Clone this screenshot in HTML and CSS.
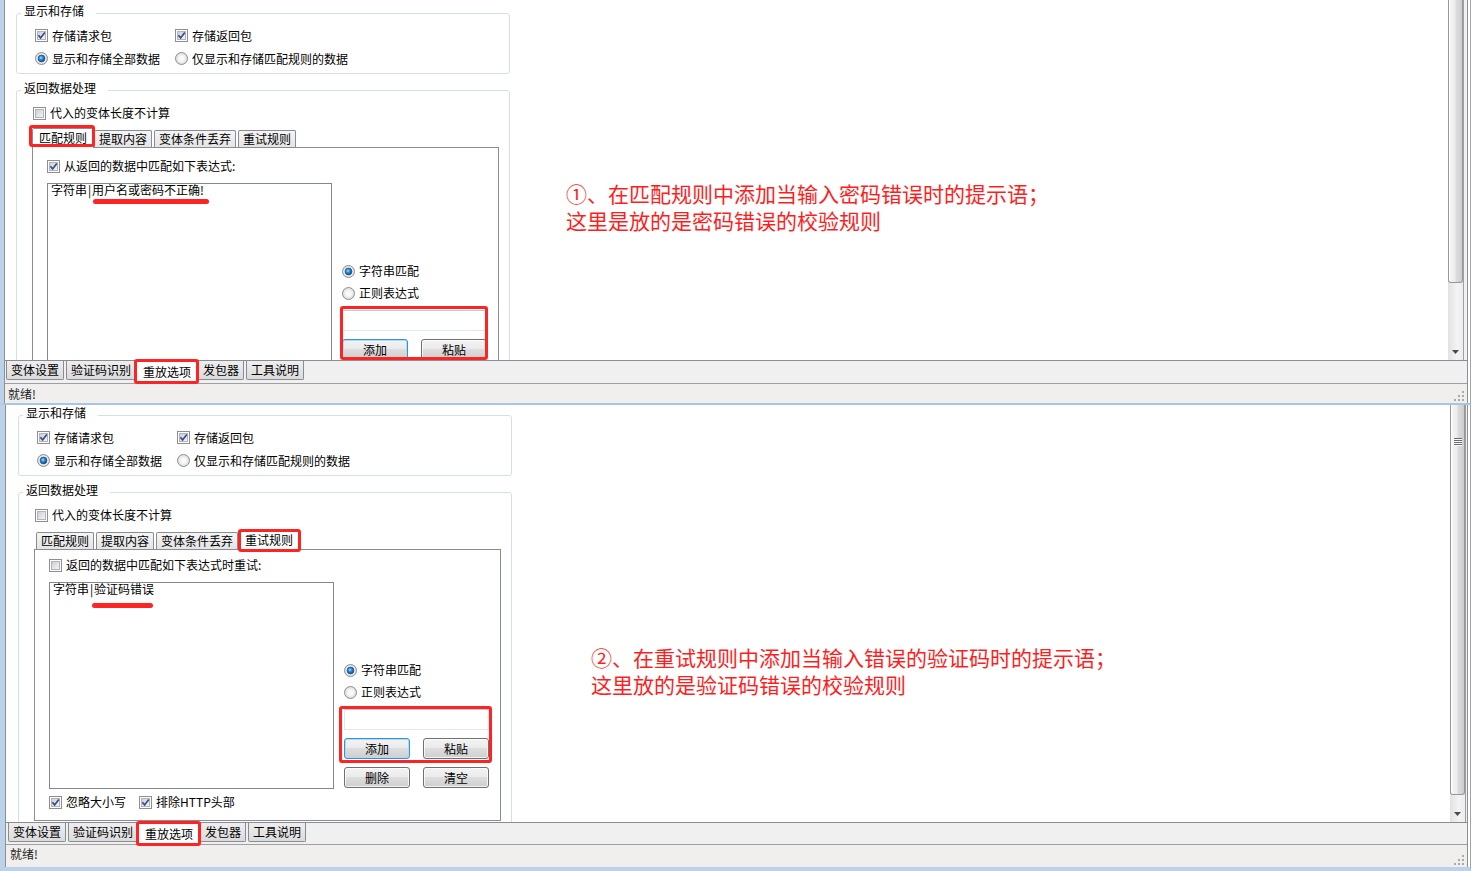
FILE: index.html
```html
<!DOCTYPE html>
<html lang="zh-CN">
<head>
<meta charset="utf-8">
<title>重放选项</title>
<link rel="stylesheet" href="styles.css">
</head>
<body>
<svg class="defs" width="0" height="0" aria-hidden="true">
  <defs>
    <linearGradient id="gCb" x1="0" y1="0" x2="1" y2="1"><stop offset="0" stop-color="#c9cdd3"/><stop offset="1" stop-color="#f7f7f7"/></linearGradient>
    <radialGradient id="gRd" cx="0.5" cy="0.5" r="0.6"><stop offset="0.3" stop-color="#fafafa"/><stop offset="1" stop-color="#cfd1d4"/></radialGradient>
    <radialGradient id="gDot" cx="0.42" cy="0.4" r="0.62"><stop offset="0" stop-color="#a6e4ff"/><stop offset="0.45" stop-color="#2a89d4"/><stop offset="1" stop-color="#0c4585"/></radialGradient>
  </defs>
</svg>

<div class="panel panel--one">
  <div class="client">
    <div class="viewport">
      <div class="content">
        <div class="group">
          <span class="legend">显示和存储</span>
          <div class="opts">
            <div class="opt"><svg class="ck" viewBox="0 0 13 13"><rect x=".5" y=".5" width="12" height="12" fill="#fff" stroke="#8f8f8f"/><rect x="2.5" y="2.5" width="8" height="8" fill="url(#gCb)" stroke="#b0b4ba"/><path d="M3.4 6.3 5.6 8.9 9.8 3.4" fill="none" stroke="#374d8a" stroke-width="1.7"/></svg><span>存储请求包</span></div>
            <div class="opt"><svg class="ck" viewBox="0 0 13 13"><rect x=".5" y=".5" width="12" height="12" fill="#fff" stroke="#8f8f8f"/><rect x="2.5" y="2.5" width="8" height="8" fill="url(#gCb)" stroke="#b0b4ba"/><path d="M3.4 6.3 5.6 8.9 9.8 3.4" fill="none" stroke="#374d8a" stroke-width="1.7"/></svg><span>存储返回包</span></div>
            <div class="opt"><svg class="rd" viewBox="0 0 13 13"><circle cx="6.5" cy="6.5" r="6" fill="url(#gRd)" stroke="#8f8f8f"/><circle cx="6.5" cy="6.5" r="3.4" fill="url(#gDot)" stroke="#1b4e82" stroke-width=".7"/></svg><span>显示和存储全部数据</span></div>
            <div class="opt"><svg class="rd" viewBox="0 0 13 13"><circle cx="6.5" cy="6.5" r="6" fill="url(#gRd)" stroke="#8f8f8f"/></svg><span>仅显示和存储匹配规则的数据</span></div>
          </div>
        </div>

        <div class="group group--resp">
          <span class="legend">返回数据处理</span>
          <div class="opt opt--lead"><svg class="ck" viewBox="0 0 13 13"><rect x=".5" y=".5" width="12" height="12" fill="#fff" stroke="#8f8f8f"/><rect x="2.5" y="2.5" width="8" height="8" fill="url(#gCb)" stroke="#b0b4ba"/></svg><span>代入的变体长度不计算</span></div>
          <div class="tabctl">
            <div class="tabhead">
              <span class="tab tab--on hl hl--tab1">匹配规则</span>
              <span class="tab">提取内容</span>
              <span class="tab">变体条件丢弃</span>
              <span class="tab">重试规则</span>
            </div>
            <div class="tabpage tabpage--match">
              <div class="opt"><svg class="ck" viewBox="0 0 13 13"><rect x=".5" y=".5" width="12" height="12" fill="#fff" stroke="#8f8f8f"/><rect x="2.5" y="2.5" width="8" height="8" fill="url(#gCb)" stroke="#b0b4ba"/><path d="M3.4 6.3 5.6 8.9 9.8 3.4" fill="none" stroke="#374d8a" stroke-width="1.7"/></svg><span>从返回的数据中匹配如下表达式:</span></div>
              <div class="pagebody">
                <div class="listbox">
                  <div class="item">字符串<span class="bar">|</span>用户名或密码不正确!</div>
                  <span class="uline uline--one"></span>
                </div>
                <div class="side">
                  <div class="opt"><svg class="rd" viewBox="0 0 13 13"><circle cx="6.5" cy="6.5" r="6" fill="url(#gRd)" stroke="#8f8f8f"/><circle cx="6.5" cy="6.5" r="3.4" fill="url(#gDot)" stroke="#1b4e82" stroke-width=".7"/></svg><span>字符串匹配</span></div>
                  <div class="opt"><svg class="rd" viewBox="0 0 13 13"><circle cx="6.5" cy="6.5" r="6" fill="url(#gRd)" stroke="#8f8f8f"/></svg><span>正则表达式</span></div>
                  <div class="addbox hl hl--add1">
                    <div class="textbox"></div>
                    <div class="btnrow"><span class="btn btn--default">添加</span><span class="btn">粘贴</span></div>
                  </div>
                </div>
              </div>
            </div>
          </div>
        </div>

        <div class="note note--one"><div>①、在匹配规则中添加当输入密码错误时的提示语；</div><div>这里是放的是密码错误的校验规则</div></div>
      </div>
      <div class="vscroll">
        <div class="thumb"></div>
        <div class="track"></div>
        <div class="sb-arrow"><svg width="7" height="4" viewBox="0 0 7 4"><path d="M0 0h7L3.5 4z" fill="#4a4a4a"/></svg></div>
      </div>
    </div>
    <div class="ptabs">
      <span class="ptab">变体设置</span>
      <span class="ptab">验证码识别</span>
      <span class="ptab ptab--on hl hl--ptab">重放选项</span>
      <span class="ptab">发包器</span>
      <span class="ptab">工具说明</span>
    </div>
    <div class="status">
      <span class="status-text">就绪!</span>
      <svg class="grip" viewBox="0 0 11 11"><path d="M8 0h2v2H8zM4 4h2v2H4zM8 4h2v2H8zM0 8h2v2H0zM4 8h2v2H4zM8 8h2v2H8z" fill="#a9a9a9"/></svg>
    </div>
  </div>
</div>

<div class="panel panel--two">
  <div class="client">
    <div class="viewport">
      <div class="content">
        <div class="group">
          <span class="legend">显示和存储</span>
          <div class="opts">
            <div class="opt"><svg class="ck" viewBox="0 0 13 13"><rect x=".5" y=".5" width="12" height="12" fill="#fff" stroke="#8f8f8f"/><rect x="2.5" y="2.5" width="8" height="8" fill="url(#gCb)" stroke="#b0b4ba"/><path d="M3.4 6.3 5.6 8.9 9.8 3.4" fill="none" stroke="#374d8a" stroke-width="1.7"/></svg><span>存储请求包</span></div>
            <div class="opt"><svg class="ck" viewBox="0 0 13 13"><rect x=".5" y=".5" width="12" height="12" fill="#fff" stroke="#8f8f8f"/><rect x="2.5" y="2.5" width="8" height="8" fill="url(#gCb)" stroke="#b0b4ba"/><path d="M3.4 6.3 5.6 8.9 9.8 3.4" fill="none" stroke="#374d8a" stroke-width="1.7"/></svg><span>存储返回包</span></div>
            <div class="opt"><svg class="rd" viewBox="0 0 13 13"><circle cx="6.5" cy="6.5" r="6" fill="url(#gRd)" stroke="#8f8f8f"/><circle cx="6.5" cy="6.5" r="3.4" fill="url(#gDot)" stroke="#1b4e82" stroke-width=".7"/></svg><span>显示和存储全部数据</span></div>
            <div class="opt"><svg class="rd" viewBox="0 0 13 13"><circle cx="6.5" cy="6.5" r="6" fill="url(#gRd)" stroke="#8f8f8f"/></svg><span>仅显示和存储匹配规则的数据</span></div>
          </div>
        </div>

        <div class="group group--resp">
          <span class="legend">返回数据处理</span>
          <div class="opt opt--lead"><svg class="ck" viewBox="0 0 13 13"><rect x=".5" y=".5" width="12" height="12" fill="#fff" stroke="#8f8f8f"/><rect x="2.5" y="2.5" width="8" height="8" fill="url(#gCb)" stroke="#b0b4ba"/></svg><span>代入的变体长度不计算</span></div>
          <div class="tabctl">
            <div class="tabhead">
              <span class="tab">匹配规则</span>
              <span class="tab">提取内容</span>
              <span class="tab">变体条件丢弃</span>
              <span class="tab tab--on hl hl--tab2">重试规则</span>
            </div>
            <div class="tabpage">
              <div class="opt"><svg class="ck" viewBox="0 0 13 13"><rect x=".5" y=".5" width="12" height="12" fill="#fff" stroke="#8f8f8f"/><rect x="2.5" y="2.5" width="8" height="8" fill="url(#gCb)" stroke="#b0b4ba"/></svg><span>返回的数据中匹配如下表达式时重试:</span></div>
              <div class="pagebody">
                <div class="listbox">
                  <div class="item">字符串<span class="bar">|</span>验证码错误</div>
                  <span class="uline uline--two"></span>
                </div>
                <div class="side">
                  <div class="opt"><svg class="rd" viewBox="0 0 13 13"><circle cx="6.5" cy="6.5" r="6" fill="url(#gRd)" stroke="#8f8f8f"/><circle cx="6.5" cy="6.5" r="3.4" fill="url(#gDot)" stroke="#1b4e82" stroke-width=".7"/></svg><span>字符串匹配</span></div>
                  <div class="opt"><svg class="rd" viewBox="0 0 13 13"><circle cx="6.5" cy="6.5" r="6" fill="url(#gRd)" stroke="#8f8f8f"/></svg><span>正则表达式</span></div>
                  <div class="addbox hl hl--add2">
                    <div class="textbox"></div>
                    <div class="btnrow"><span class="btn btn--default">添加</span><span class="btn">粘贴</span></div>
                  </div>
                  <div class="btnrow"><span class="btn">删除</span><span class="btn">清空</span></div>
                </div>
              </div>
              <div class="optrow">
                <div class="opt"><svg class="ck" viewBox="0 0 13 13"><rect x=".5" y=".5" width="12" height="12" fill="#fff" stroke="#8f8f8f"/><rect x="2.5" y="2.5" width="8" height="8" fill="url(#gCb)" stroke="#b0b4ba"/><path d="M3.4 6.3 5.6 8.9 9.8 3.4" fill="none" stroke="#374d8a" stroke-width="1.7"/></svg><span>忽略大小写</span></div>
                <div class="opt"><svg class="ck" viewBox="0 0 13 13"><rect x=".5" y=".5" width="12" height="12" fill="#fff" stroke="#8f8f8f"/><rect x="2.5" y="2.5" width="8" height="8" fill="url(#gCb)" stroke="#b0b4ba"/><path d="M3.4 6.3 5.6 8.9 9.8 3.4" fill="none" stroke="#374d8a" stroke-width="1.7"/></svg><span>排除HTTP头部</span></div>
              </div>
            </div>
          </div>
        </div>

        <div class="note note--two"><div>②、在重试规则中添加当输入错误的验证码时的提示语；</div><div>这里放的是验证码错误的校验规则</div></div>
      </div>
      <div class="vscroll">
        <div class="thumb"><svg class="thumb-grip" width="8" height="9" viewBox="0 0 8 9"><path d="M0 .5h8M0 2.5h8M0 4.5h8M0 6.5h8" stroke="#6b6b6b"/><path d="M0 1.5h8M0 3.5h8M0 5.5h8M0 7.5h8" stroke="#fafafa"/></svg></div>
        <div class="track"></div>
        <div class="sb-arrow"><svg width="7" height="4" viewBox="0 0 7 4"><path d="M0 0h7L3.5 4z" fill="#4a4a4a"/></svg></div>
      </div>
    </div>
    <div class="ptabs">
      <span class="ptab">变体设置</span>
      <span class="ptab">验证码识别</span>
      <span class="ptab ptab--on hl hl--ptab">重放选项</span>
      <span class="ptab">发包器</span>
      <span class="ptab">工具说明</span>
    </div>
    <div class="status">
      <span class="status-text">就绪!</span>
      <svg class="grip" viewBox="0 0 11 11"><path d="M8 0h2v2H8zM4 4h2v2H4zM8 4h2v2H8zM0 8h2v2H0zM4 8h2v2H4zM8 8h2v2H8z" fill="#a9a9a9"/></svg>
    </div>
  </div>
</div>
</body>
</html>
```
FILE: styles.css
```css
* { box-sizing: border-box; }
html, body { margin: 0; padding: 0; }
body {
  width: 1473px;
  height: 871px;
  overflow: hidden;
  background: #fff;
  font-family: "Noto Sans CJK SC", "Noto Sans CJK TC", sans-serif;
  font-size: 12px;
  color: #000;
}
.defs { display: block; width: 0; height: 0; overflow: hidden; }

/* window frames */
.panel {
  display: flex;
  width: 1471px;
  background: #fff;
  border-left: 4px solid #bcd2ea;
  border-right: 1px solid #9da4ac;
  padding-right: 2px;
}
.panel--one { height: 405px; border-bottom: 2px solid #a9c5e5; }
.panel--two { height: 466px; border-left-width: 5px; border-bottom: 4px solid #bcd2ea; }

.client {
  flex: 1;
  min-width: 0;
  display: flex;
  flex-direction: column;
  background: #f0f0f0;
  border-left: 1px solid #8e8f8f;
  border-right: 1px solid #8e8f8f;
}
.viewport {
  flex: none;
  display: flex;
  background: #fff;
  border-right: 1px solid #a0a0a0;
  overflow: hidden;
}
.panel--one .viewport { height: 360px; margin-right: 3px; }
.panel--two .viewport { height: 417px; margin-right: 1px; }

.content { flex: 1; min-width: 0; position: relative; }
.panel--one .content { padding: 13px 0 0 11px; }
.panel--two .content { padding: 10px 0 0 12px; }

/* group boxes */
.group {
  position: relative;
  width: 494px;
  border: 1px solid #d5dfe5;
  border-radius: 3px;
}
.legend {
  position: absolute;
  top: -10px;
  left: 4px;
  padding: 0 12px 0 3px;
  background: #fff;
  line-height: 14px;
  white-space: nowrap;
}
.opts {
  display: grid;
  grid-template-columns: 140px auto;
  grid-auto-rows: 23px;
  align-items: center;
  padding: 10px 0 3px 18px;
}
.group--resp { margin-top: 16px; padding: 14px 0 10px 15px; }

.opt {
  display: flex;
  align-items: center;
  gap: 4px;
  height: 16px;
  line-height: 16px;
  white-space: nowrap;
}
.opt--lead { padding-left: 1px; }
.ck, .rd { display: block; flex: none; width: 13px; height: 13px; }

/* tab control */
.tabctl { margin-top: 7px; width: 467px; }
.tabhead {
  display: flex;
  align-items: flex-end;
  gap: 2px;
  height: 19px;
  padding-left: 2px;
}
.tab {
  height: 17px;
  padding: 0 4px;
  border: 1px solid #898c95;
  border-bottom: 0;
  border-radius: 2px 2px 0 0;
  background: linear-gradient(#f5f5f5, #e4e4e4);
  display: flex;
  align-items: center;
  line-height: 14px;
  white-space: nowrap;
}
.tab--on {
  position: relative;
  z-index: 1;
  height: 20px;
  margin: 0 -2px -1px;
  padding: 0 6px 2px;
  background: #fff;
}
.tabpage {
  border: 1px solid #898c95;
  background: #fff;
  padding: 7px 0 10px 14px;
}
.tabpage--match { padding-top: 10px; }

.pagebody { display: flex; margin-top: 9px; }
.listbox {
  position: relative;
  flex: none;
  width: 285px;
  height: 207px;
  border: 1px solid #828790;
  padding: 0 3px;
}
.item { line-height: 12px; white-space: nowrap; }
.bar { display: inline-block; width: 5px; text-align: center; }
.uline {
  position: absolute;
  height: 5px;
  border-radius: 3px;
  background: #ff2424;
}
.uline--one { left: 45px; top: 15px; width: 116px; }
.uline--two { left: 42px; top: 20px; width: 61px; }

.side {
  flex: none;
  width: 145px;
  margin-left: 10px;
  display: flex;
  flex-direction: column;
  padding-top: 77px;
}
.side .opt { height: 22px; }
.addbox { margin-top: 6px; }
.textbox {
  height: 21px;
  background: #fff;
  border: 1px solid #e2e7ec;
  border-top-color: #c3cad2;
}
.btnrow { display: flex; justify-content: space-between; margin-top: 8px; }
.btn {
  width: 66px;
  height: 21px;
  border: 1px solid #707070;
  border-radius: 3px;
  background: linear-gradient(#f3f3f3 0%, #ebebeb 45%, #dddddd 50%, #cfcfcf 100%);
  box-shadow: inset 0 0 0 1px rgba(255, 255, 255, 0.75);
  display: flex;
  align-items: center;
  justify-content: center;
  line-height: 14px;
}
.btn--default { border-color: #3c8fd0; box-shadow: inset 0 0 0 1px #a9def8; }

.optrow { display: flex; gap: 13px; margin-top: 5px; }

/* red annotation boxes */
.hl { position: relative; }
.hl::after {
  content: "";
  position: absolute;
  border: 3px solid #ff2424;
  border-radius: 3px;
  z-index: 3;
}
.hl--tab1::after { top: -4px; bottom: 1px; left: -4px; right: -2px; }
.hl--tab2::after { top: -2px; bottom: -2px; left: -1px; right: -2px; }
.hl--add1::after { top: -4px; bottom: 0; left: -2px; right: -1px; }
.hl--add2::after { top: -3px; bottom: -4px; left: -5px; right: -3px; }
.hl--ptab::after { top: -1px; bottom: -2px; left: -3px; right: -2px; }

.note {
  position: absolute;
  font-size: 21px;
  line-height: 27px;
  color: #ff1e1e;
  white-space: nowrap;
}
.note--one { left: 561px; top: 180px; }
.note--two { left: 585px; top: 239px; }

/* scrollbar */
.vscroll {
  flex: none;
  width: 15px;
  display: flex;
  flex-direction: column;
  background: linear-gradient(to right, #e2e2e2, #f3f3f3 60%, #ececec);
}
.thumb {
  flex: none;
  border: 1px solid #979797;
  border-top: 0;
  border-radius: 0 0 3px 3px;
  background: linear-gradient(to right, #f7f7f7, #ececec 45%, #dcdcdc 55%, #cdcdcd);
  box-shadow: inset 1px 0 0 #fff;
}
.panel--one .thumb { height: 283px; }
.panel--two .thumb { height: 390px; padding-top: 33px; display: flex; justify-content: center; }
.thumb-grip { display: block; }
.track { flex: 1; }
.sb-arrow {
  flex: none;
  height: 17px;
  display: flex;
  align-items: center;
  justify-content: center;
}

/* bottom tab strip */
.ptabs {
  flex: none;
  display: flex;
  align-items: flex-start;
  gap: 2px;
  border-top: 1px solid #898c95;
}
.panel--one .ptabs { height: 23px; padding-left: 1px; }
.panel--two .ptabs { height: 22px; padding-left: 2px; }
.ptab {
  height: 19px;
  padding: 0 4px;
  border: 1px solid #898c95;
  border-top: 0;
  border-radius: 0 0 2px 2px;
  background: linear-gradient(#eeeeee, #dbdbdb);
  display: flex;
  align-items: center;
  line-height: 14px;
  white-space: nowrap;
}
.ptab--on {
  position: relative;
  z-index: 1;
  height: 23px;
  margin: -1px -2px 0;
  padding: 2px 6px 0;
  background: #fff;
}

/* status bar */
.status {
  flex: 1;
  display: flex;
  border-top: 1px solid #a0a0a0;
  background: #f0efee;
}
.panel--one .status { padding: 3px 2px 1px 3px; }
.panel--two .status { padding: 2px 2px 1px 4px; }
.status-text { line-height: 14px; color: #1e1e1e; }
.grip { display: block; margin-left: auto; align-self: flex-end; width: 11px; height: 11px; }
```
